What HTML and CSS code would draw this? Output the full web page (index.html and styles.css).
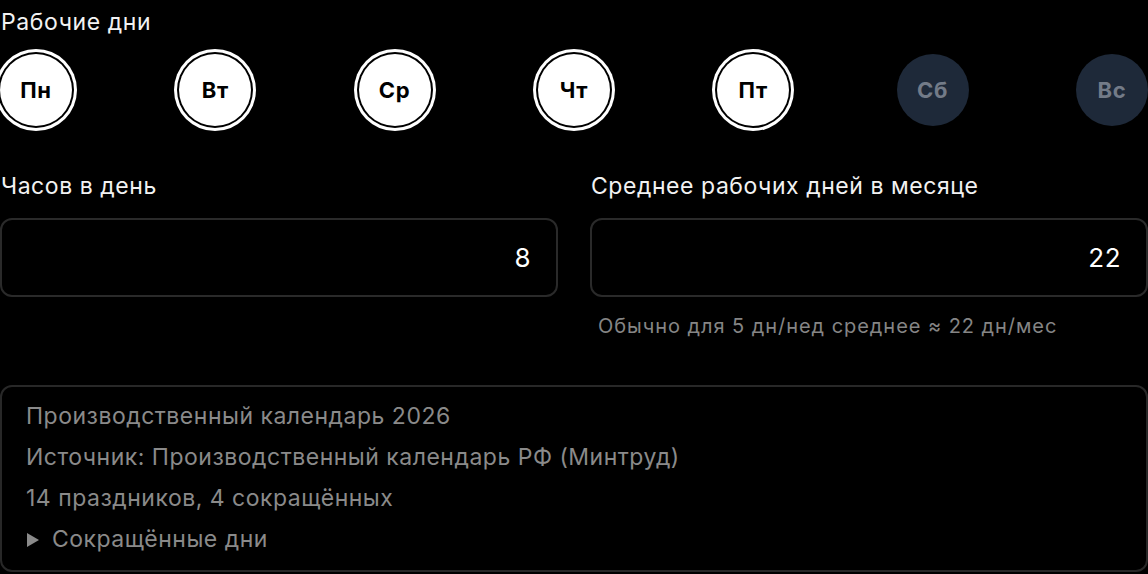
FILE: index.html
```html
<!DOCTYPE html>
<html lang="ru">
<head>
<meta charset="utf-8">
<title>Рабочие дни</title>
<link rel="stylesheet" href="styles.css">
</head>
<body>
<div class="page">
  <div class="section-title">Рабочие дни</div>
  <div class="days">
    <div class="day day-on">Пн</div>
    <div class="day day-on">Вт</div>
    <div class="day day-on">Ср</div>
    <div class="day day-on">Чт</div>
    <div class="day day-on">Пт</div>
    <div class="day day-off">Сб</div>
    <div class="day day-off">Вс</div>
  </div>
  <div class="fields">
    <div class="field">
      <div class="field-label">Часов в день</div>
      <div class="field-input">8</div>
    </div>
    <div class="field">
      <div class="field-label">Среднее рабочих дней в месяце</div>
      <div class="field-input">22</div>
      <div class="field-hint">Обычно для 5 дн/нед среднее ≈ 22 дн/мес</div>
    </div>
  </div>
  <div class="calendar">
    <div class="cal-line">Производственный календарь 2026</div>
    <div class="cal-line">Источник: Производственный календарь РФ (Минтруд)</div>
    <div class="cal-line">14 праздников, 4 сокращённых</div>
    <div class="cal-line cal-toggle"><span class="triangle"></span>Сокращённые дни</div>
  </div>
</div>
</body>
</html>
```
FILE: styles.css
```css
html, body {
  margin: 0;
  padding: 0;
  background: #000;
}
body {
  font-family: Inter, "Noto Sans", sans-serif;
  color: #f2f2f2;
  width: 1148px;
  height: 574px;
  overflow: hidden;
}
.page {
  display: flex;
  flex-direction: column;
}
.section-title {
  font-size: 23px;
  letter-spacing: 0.6px;
  line-height: 28px;
  padding-top: 8px;
  padding-left: 1px;
}
.days {
  margin-top: 18px;
  display: flex;
  justify-content: space-between;
}
.day {
  width: 72px;
  height: 72px;
  border-radius: 50%;
  display: flex;
  align-items: center;
  justify-content: center;
  font-size: 22px;
  letter-spacing: 0.8px;
  font-weight: 700;
}
.day-on {
  background: #fff;
  color: #000;
  box-shadow: 0 0 0 2px #000, 0 0 0 5px #fff;
}
.day-off {
  background: #1e2939;
  color: #737b88;
}
.fields {
  margin-top: 46px;
  display: grid;
  grid-template-columns: 1fr 1fr;
  column-gap: 32px;
}
.field-label {
  font-size: 23px;
  letter-spacing: 0.55px;
  line-height: 28px;
  padding-left: 1px;
}
.field-input {
  margin-top: 18px;
  height: 79px;
  box-sizing: border-box;
  border: 2px solid #2a2a2a;
  border-radius: 12px;
  display: flex;
  align-items: center;
  justify-content: flex-end;
  padding-right: 25px;
  font-size: 26px;
  letter-spacing: 0.5px;
  color: #fff;
}
.field-hint {
  margin-top: 17px;
  padding-left: 8px;
  font-size: 20px;
  letter-spacing: 0.95px;
  line-height: 24px;
  color: #858585;
}
.calendar {
  margin-top: 47px;
  border: 2px solid #282828;
  border-radius: 12px;
  padding: 9px 24px 10px;
  height: 187px;
  box-sizing: border-box;
}
.cal-line {
  font-size: 23px;
  letter-spacing: 0.5px;
  line-height: 41px;
  color: #8a8a8a;
}
.cal-toggle {
  display: flex;
  align-items: center;
}
.triangle {
  width: 0;
  height: 0;
  border-top: 7px solid transparent;
  border-bottom: 7px solid transparent;
  border-left: 12px solid #8a8a8a;
  margin-left: 1px;
  margin-right: 13px;
}
```
